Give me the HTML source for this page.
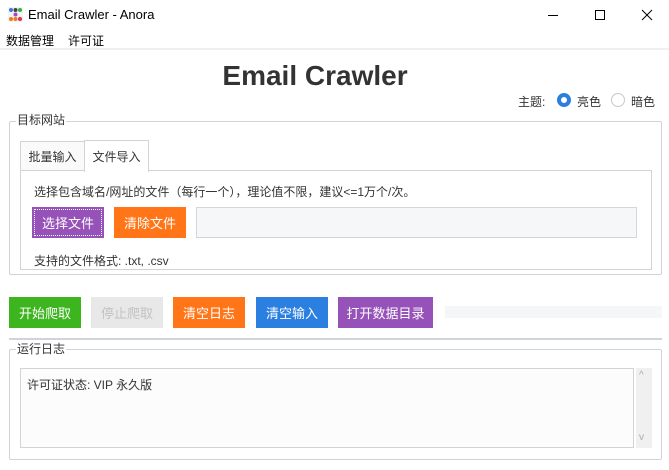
<!DOCTYPE html>
<html><head><meta charset="utf-8"><style>
*{margin:0;padding:0;box-sizing:border-box}
body{width:669px;height:470px;background:#fff;position:relative;overflow:hidden;font-family:"Liberation Sans","Noto Sans CJK SC",sans-serif;font-size:12px;color:#222}
.a{position:absolute}
.btn{position:absolute;color:#fff;font-size:13px;display:flex;align-items:center;justify-content:center}
.grp{position:absolute;border:1px solid #d0d3d8;border-radius:2px}
.lbl{position:absolute;background:#fff;padding:0 1px;font-size:12px;color:#333}
</style></head><body>
<!-- title bar -->
<svg class="a" style="left:8px;top:7px" width="15" height="15" viewBox="0 0 15 15">
<rect x="0" y="0" width="15" height="15" fill="#f3f3f3"/>
<circle cx="3" cy="3" r="2" fill="#3a7be0"/><circle cx="7.5" cy="3" r="2" fill="#444"/><circle cx="12" cy="3" r="2" fill="#2fb24a"/>
<circle cx="7.5" cy="7.5" r="2" fill="#9a4fc0"/>
<circle cx="3" cy="12" r="2" fill="#f07a20"/><circle cx="7.5" cy="12" r="2" fill="#f07a20"/><circle cx="12" cy="12" r="2" fill="#e03050"/>
</svg>
<div class="a" style="left:28px;top:7px;font-size:13px;color:#000">Email Crawler - Anora</div>
<svg class="a" style="left:548px;top:8px" width="110" height="14">
<line x1="0" y1="7.5" x2="10" y2="7.5" stroke="#000"/>
<rect x="47.5" y="2.5" width="9" height="9" fill="none" stroke="#000"/>
<line x1="94" y1="2" x2="104" y2="12" stroke="#000"/><line x1="104" y1="2" x2="94" y2="12" stroke="#000"/>
</svg>
<div class="a" style="left:6px;top:32px;font-size:12px;color:#000">数据管理</div>
<div class="a" style="left:68px;top:32px;font-size:12px;color:#000">许可证</div>
<div class="a" style="left:0;top:48px;width:669px;height:2px;background:#f0f0f0"></div>
<div class="a" style="left:0;top:60px;width:630px;text-align:center;font-size:28px;font-weight:bold;color:#333">Email Crawler</div>
<div class="a" style="left:518px;top:93px;color:#333">主题:</div>
<div class="a" style="left:557px;top:93px;width:14px;height:14px;border-radius:50%;border:4px solid #2a7fe0;background:#fff"></div>
<div class="a" style="left:577px;top:93px;color:#333">亮色</div>
<div class="a" style="left:611px;top:93px;width:14px;height:14px;border-radius:50%;border:1px solid #c8c8c8;background:#fff"></div>
<div class="a" style="left:631px;top:93px;color:#333">暗色</div>
<!-- group 1 -->
<div class="grp" style="left:9px;top:121px;width:653px;height:154px"></div>
<div class="lbl" style="left:16px;top:111px">目标网站</div>
<div class="a" style="left:20px;top:141px;width:65px;height:30px;border:1px solid #d0d3d8;background:#fafafa;text-align:center;line-height:30px;color:#333">批量输入</div>
<div class="a" style="left:20px;top:170px;width:632px;height:100px;border:1px solid #d0d3d8;background:#fff"></div>
<div class="a" style="left:84px;top:140px;width:65px;height:32px;border:1px solid #d0d3d8;border-bottom:none;background:#fff;text-align:center;line-height:32px;color:#333">文件导入</div>
<div class="a" style="left:34px;top:183px;color:#333">选择包含域名/网址的文件（每行一个），理论值不限，建议&lt;=1万个/次。</div>
<div class="btn" style="left:32px;top:207px;width:72px;height:31px;background:#9652b8;outline:1px dotted #fff;outline-offset:-3px">选择文件</div>
<div class="btn" style="left:114px;top:207px;width:72px;height:31px;background:#ff7518">清除文件</div>
<div class="a" style="left:196px;top:207px;width:441px;height:31px;background:#f6f7f9;border:1px solid #d4d6da"></div>
<div class="a" style="left:34px;top:252px;color:#333">支持的文件格式: .txt, .csv</div>
<!-- buttons -->
<div class="btn" style="left:9px;top:297px;width:72px;height:31px;background:#3db51f">开始爬取</div>
<div class="btn" style="left:91px;top:297px;width:72px;height:31px;background:#e8e8e8;color:#c2c2c2">停止爬取</div>
<div class="btn" style="left:173px;top:297px;width:72px;height:31px;background:#ff7518">清空日志</div>
<div class="btn" style="left:256px;top:297px;width:72px;height:31px;background:#2a7fe0">清空输入</div>
<div class="btn" style="left:338px;top:297px;width:95px;height:31px;background:#9652b8">打开数据目录</div>
<div class="a" style="left:445px;top:306px;width:217px;height:12px;background:#f5f6f8"></div>
<div class="a" style="left:9px;top:338px;width:653px;height:2px;background:#d0d3d8"></div>
<!-- log -->
<div class="grp" style="left:9px;top:349px;width:653px;height:111px"></div>
<div class="lbl" style="left:16px;top:340px">运行日志</div>
<div class="a" style="left:20px;top:368px;width:614px;height:80px;background:#fcfcfc;border:1px solid #d0d3d8"></div>
<div class="a" style="left:27px;top:376px;color:#333">许可证状态: VIP 永久版</div>
<div class="a" style="left:636px;top:368px;width:16px;height:80px;background:#f0f0f0"></div>
<div class="a" style="left:639px;top:370px;color:#aaa;font-size:10px">^</div>
<div class="a" style="left:639px;top:432px;color:#aaa;font-size:10px">v</div>
</body></html>
